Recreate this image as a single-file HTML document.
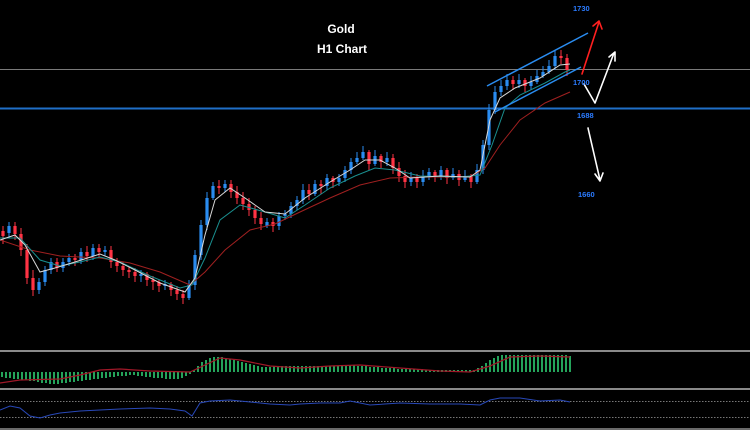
<!DOCTYPE html>
<html><head><meta charset="utf-8"><style>
html,body{margin:0;padding:0;background:#000;width:750px;height:430px;overflow:hidden}
svg{display:block}
text{font-family:"Liberation Sans",sans-serif;font-weight:bold}
</style></head><body>
<svg width="750" height="430" viewBox="0 0 750 430" xmlns="http://www.w3.org/2000/svg">
<rect width="750" height="430" fill="#000"/>
<line x1="0" y1="69.5" x2="750" y2="69.5" stroke="#7a7a7a" stroke-width="1"/>
<line x1="0" y1="108.5" x2="750" y2="108.5" stroke="#1f6fc8" stroke-width="2"/>

<!-- blue candles: wicks then bodies -->
<path stroke="#2a8cf0" stroke-width="1" fill="none" d="M9 222V238M39 278V294M45 266V286M51 258V274M63 258V272M69 254V266M81 248V264M93 244V260M105 246V256M141 270V282M165 280V290M189 280V300M195 250V290M201 220V260M207 192V230M213 182V200M225 180V192M267 218V228M279 212V230M285 210V220M291 202V218M297 196V210M303 184V204M315 180V196M327 174V190M339 174V186M345 166V182M351 158V174M357 152V164M363 146V160M375 150V166M387 152V166M411 172V186M423 170V186M429 168V180M441 166V180M453 168V180M465 170V182M477 164V184M483 140V174M489 104V150M495 86V114M501 80V96M507 74V90M519 74V88M531 76V90M537 70V84M543 66V78M549 60V74M555 50V70"/>
<path stroke="#2a8cf0" stroke-width="3.2" fill="none" d="M9 226V233M39 282V290M45 270V282M51 262V270M63 262V268M69 258V262M81 252V260M93 248V256M105 250V252M141 274V276M165 284V286M189 285V298M195 255V285M201 225V255M207 198V225M213 186V198M225 184V188M267 222V226M279 216V226M285 214V216M291 206V214M297 200V206M303 190V200M315 184V194M327 178V186M339 178V182M345 170V178M351 162V170M357 158V162M363 152V158M375 156V164M387 158V162M411 178V182M423 176V182M429 172V176M441 170V176M453 174V178M465 176V180M477 170V182M483 145V170M489 110V145M495 92V110M501 86V92M507 80V86M519 80V84M531 82V86M537 76V82M543 72V76M549 66V72M555 56V66"/>
<path stroke="#ff3344" stroke-width="1" fill="none" d="M3 226V244M15 222V240M21 228V256M27 244V284M33 270V296M57 258V272M75 254V266M87 246V262M99 244V258M111 246V268M117 258V272M123 262V276M129 266V278M135 268V282M147 272V286M153 276V290M159 280V292M171 282V296M177 286V300M183 290V304M219 180V194M231 180V198M237 186V204M243 192V210M249 198V216M255 206V224M261 212V230M273 218V232M309 184V200M321 180V194M333 176V188M369 150V170M381 154V168M393 154V174M399 162V182M405 170V188M417 174V188M435 170V182M447 168V184M459 170V186M471 174V188M513 76V90M525 78V92M561 50V64M567 54V76"/>
<path stroke="#ff3344" stroke-width="3.2" fill="none" d="M3 231V236M15 226V234M21 234V250M27 250V278M33 278V290M57 262V268M75 258V260M87 252V256M99 248V252M111 250V262M117 262V266M123 266V270M129 270V272M135 272V276M147 274V280M153 280V282M159 282V286M171 284V290M177 290V294M183 294V298M219 186V188M231 184V192M237 192V198M243 198V204M249 204V210M255 210V218M261 218V224M273 222V226M309 190V194M321 184V186M333 178V182M369 152V164M381 156V162M393 158V168M399 168V176M405 176V182M417 178V182M435 172V176M447 170V178M459 174V180M471 176V182M513 80V84M525 80V86M561 56V58M567 58V70"/>

<polyline fill="none" stroke="#a02020" stroke-width="1" points="0,240 30,250 60,256 100,258 130,263 160,272 190,285 205,272 225,250 250,230 275,224 300,212 330,198 360,185 390,178 420,177 470,177 485,168 500,145 520,120 545,103 570,92"/>
<polyline fill="none" stroke="#1a8f8f" stroke-width="1" points="0,238 20,238 40,260 60,266 80,262 100,257 120,262 150,276 180,288 192,285 205,258 220,220 240,205 265,212 285,218 305,205 330,188 355,176 375,168 395,170 420,176 460,177 480,175 492,145 505,108 520,95 545,83 565,72 570,70"/>
<polyline fill="none" stroke="#d8d8d8" stroke-width="1" points="0,240 15,235 25,245 40,272 55,268 75,262 100,254 115,260 135,270 160,283 185,292 195,278 205,235 215,200 230,188 245,198 265,212 285,214 305,198 330,182 350,170 365,160 380,160 395,168 410,178 440,176 470,177 480,170 490,120 500,98 515,88 540,78 560,65 570,64"/>

<line x1="487" y1="86" x2="588" y2="33" stroke="#2a8cf0" stroke-width="1.5"/>
<line x1="495" y1="112" x2="581" y2="67" stroke="#2a8cf0" stroke-width="1.5"/>
<g fill="none" stroke-width="1.6" stroke-linejoin="round" stroke-linecap="round">
<path d="M582 74 L599 22 M593 26 L599 21 L602 29" stroke="#ff2020"/>
<path d="M584 84 L595 103 L614 53 M609 57 L615 52 L615 61" stroke="#fff"/>
<path d="M588 128 L600 180 M595 174 L600 181 L603 173" stroke="#fff"/>
</g>
<g fill="#2b7bff" font-size="7.5">
<text x="573" y="11">1730</text>
<text x="573" y="85">1700</text>
<text x="577" y="118">1688</text>
<text x="578" y="197">1660</text>
</g>
<g fill="#fff" font-size="12" text-anchor="middle">
<text x="341" y="33">Gold</text>
<text x="342" y="53">H1 Chart</text>
</g>

<rect x="0" y="350" width="750" height="2" fill="#8a8a8a"/>
<rect x="0" y="388" width="750" height="2" fill="#8a8a8a"/>
<rect x="0" y="428" width="750" height="2" fill="#6a6a6a"/>
<line x1="0" y1="401.5" x2="750" y2="401.5" stroke="#777" stroke-dasharray="1.5,1.5"/>
<line x1="0" y1="417.5" x2="750" y2="417.5" stroke="#777" stroke-dasharray="1.5,1.5"/>

<path stroke="#2ecc71" stroke-width="1.6" fill="none" d="M2 372V377M6 372V378M10 372V378M14 372V379M18 372V379M22 372V380M26 372V380M30 372V381M34 372V381M38 372V382M42 372V383M46 372V383M50 372V384M54 372V384M58 372V384M62 372V383M66 372V383M70 372V382M74 372V382M78 372V381M82 372V381M86 372V380M90 372V380M94 372V379M98 372V379M102 372V378M106 372V378M110 372V377M114 372V377M118 372V376M122 372V376M126 372V376M130 372V375M134 372V375M138 372V376M142 372V376M146 372V377M150 372V377M154 372V378M158 372V378M162 372V378M166 372V379M170 372V379M174 372V379M178 372V379M182 372V378M186 372V376M190 372V374M194 372V370M198 372V366M202 372V362M206 372V360M210 372V358M214 372V357M218 372V357M222 372V357M226 372V358M230 372V359M234 372V360M238 372V361M242 372V362M246 372V363M250 372V364M254 372V365M258 372V366M262 372V367M266 372V367M270 372V367M274 372V366M278 372V366M282 372V366M286 372V366M290 372V366M294 372V366M298 372V366M302 372V366M306 372V366M310 372V366M314 372V366M318 372V366M322 372V366M326 372V366M330 372V366M334 372V366M338 372V366M342 372V366M346 372V365M350 372V365M354 372V365M358 372V366M362 372V366M366 372V366M370 372V367M374 372V367M378 372V367M382 372V368M386 372V368M390 372V368M394 372V368M398 372V369M402 372V369M406 372V369M410 372V369M414 372V369M418 372V369M422 372V369M426 372V370M430 372V370M434 372V370M438 372V370M442 372V370M446 372V370M450 372V370M454 372V370M458 372V370M462 372V370M466 372V370M470 372V370M474 372V370M478 372V368M482 372V366M486 372V363M490 372V360M494 372V358M498 372V356M502 372V355M506 372V355M510 372V355M514 372V355M518 372V355M522 372V355M526 372V355M530 372V355M534 372V355M538 372V355M542 372V355M546 372V355M550 372V355M554 372V355M558 372V355M562 372V355M566 372V355M570 372V356"/>
<polyline fill="none" stroke="#a01828" stroke-width="1.2" points="0,383 20,380 60,379 80,375 100,370 120,369 150,371 190,372 205,365 220,358 240,360 270,366 300,368 330,366 360,365 400,368 440,371 470,372 490,366 510,357 540,356 570,357"/>
<polyline fill="none" stroke="#2848b8" stroke-width="1" points="0,410 10,406 20,408 30,416 40,418 50,415 60,413 80,411 100,410 120,409 150,408 170,409 185,411 192,416 200,403 210,401 230,400 250,402 270,404 290,405 300,404 320,403 340,403 350,401 370,405 400,403 430,404 460,404 480,405 490,400 500,398 520,398 540,401 560,400 570,402"/>
</svg>
</body></html>
